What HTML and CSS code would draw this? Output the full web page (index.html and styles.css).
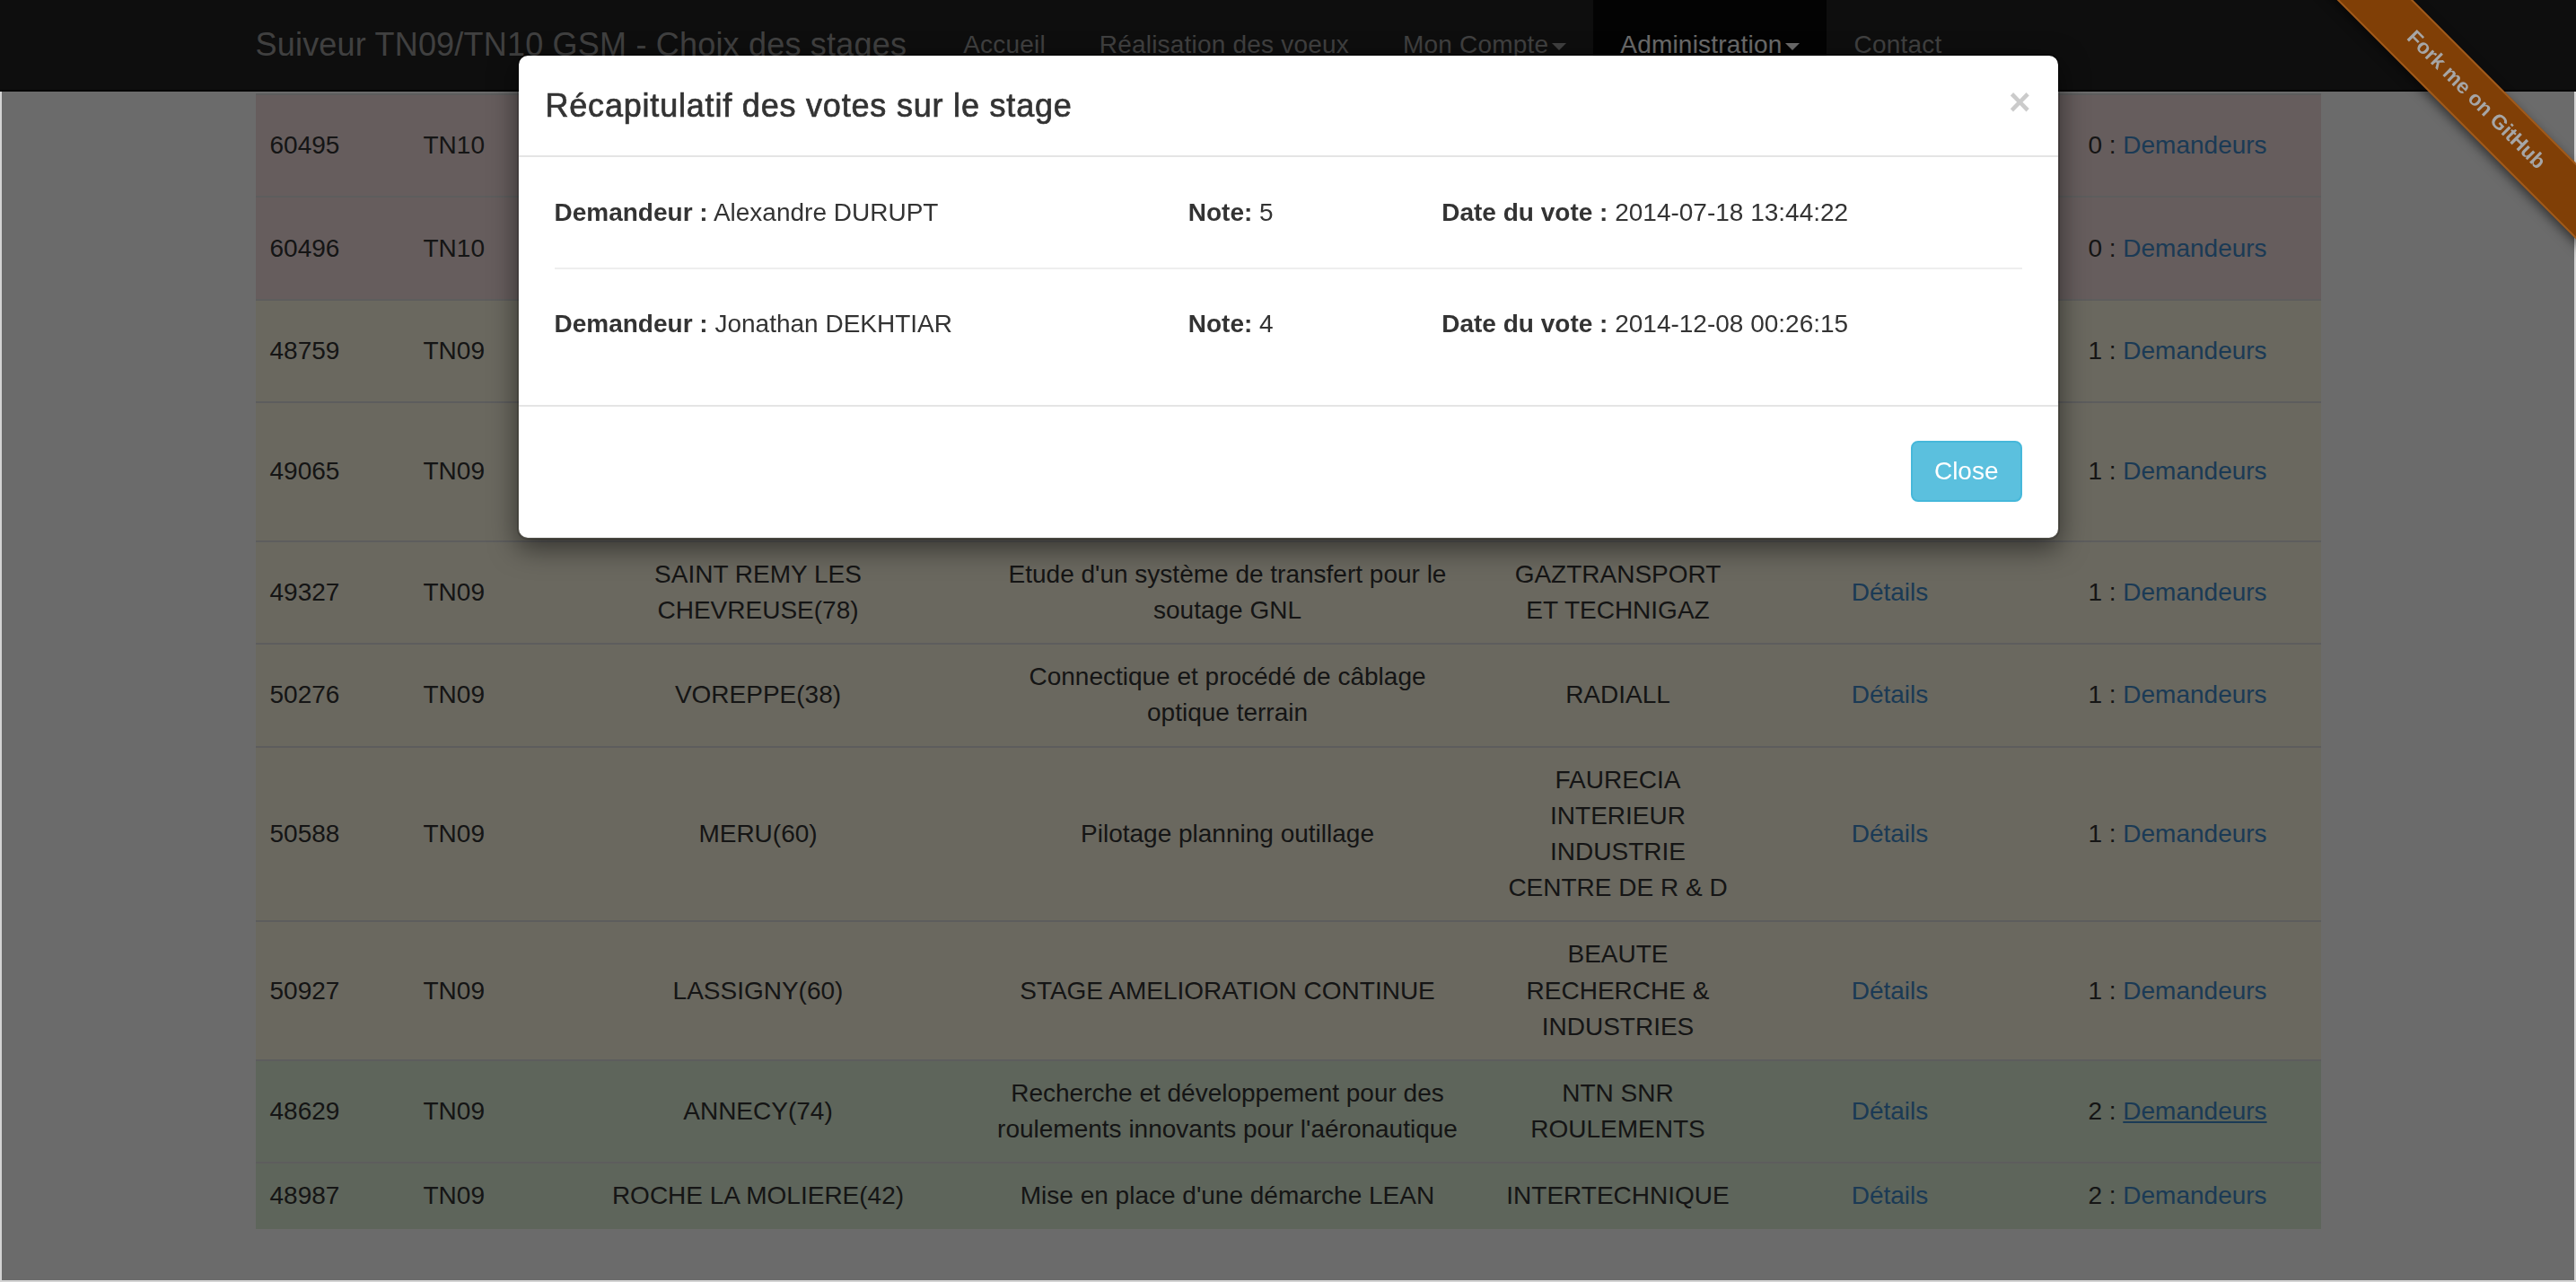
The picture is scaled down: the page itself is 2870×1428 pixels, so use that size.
FILE: index.html
```html
<!DOCTYPE html>
<html lang="fr">
<head>
<meta charset="utf-8">
<title>Suiveur TN09/TN10 GSM - Choix des stages</title>
<link rel="stylesheet" href="styles.css">
</head>
<body>
<nav class="navbar">
  <div class="container nav-inner">
    <a class="brand" href="#">Suiveur TN09/TN10 GSM - Choix des stages</a>
    <ul class="nav">
      <li><a href="#">Accueil</a></li>
      <li><a href="#">Réalisation des voeux</a></li>
      <li><a href="#">Mon Compte<span class="caret"></span></a></li>
      <li class="active"><a href="#">Administration<span class="caret"></span></a></li>
      <li><a href="#">Contact</a></li>
    </ul>
  </div>
</nav>

<main class="container">
  <table class="stages">
    <colgroup>
      <col class="c-id"><col class="c-tn"><col class="c-city"><col class="c-desc"><col class="c-comp"><col class="c-det"><col class="c-dem">
    </colgroup>
    <tbody>
      <tr class="danger">
        <td>60495</td><td>TN10</td><td class="ctr">MARIGNANE(13)</td><td class="ctr desc">Analyse de la valeur</td><td class="ctr comp">AIRBUS HELICOPTERS</td><td class="ctr"><a href="#">Détails</a></td><td class="ctr">0 : <a href="#">Demandeurs</a></td>
      </tr>
      <tr class="danger">
        <td>60496</td><td>TN10</td><td class="ctr">VELIZY(78)</td><td class="ctr desc">Gestion de projet</td><td class="ctr comp">VALEO SYSTEMES THERMIQUES</td><td class="ctr"><a href="#">Détails</a></td><td class="ctr">0 : <a href="#">Demandeurs</a></td>
      </tr>
      <tr class="warning">
        <td>48759</td><td>TN09</td><td class="ctr">ISTRES(13)</td><td class="ctr desc">Industrialisation</td><td class="ctr comp">DASSAULT AVIATION</td><td class="ctr"><a href="#">Détails</a></td><td class="ctr">1 : <a href="#">Demandeurs</a></td>
      </tr>
      <tr class="warning">
        <td>49065</td><td>TN09</td><td class="ctr">FLORANGE(57)</td><td class="ctr desc">Maintenance</td><td class="ctr comp">ARCELORMITTAL ATLANTIQUE ET LORRAINE</td><td class="ctr"><a href="#">Détails</a></td><td class="ctr">1 : <a href="#">Demandeurs</a></td>
      </tr>
      <tr class="warning">
        <td>49327</td><td>TN09</td><td class="ctr">SAINT REMY LES CHEVREUSE(78)</td><td class="ctr desc">Etude d'un système de transfert pour le soutage GNL</td><td class="ctr comp">GAZTRANSPORT ET TECHNIGAZ</td><td class="ctr"><a href="#">Détails</a></td><td class="ctr">1 : <a href="#">Demandeurs</a></td>
      </tr>
      <tr class="warning">
        <td>50276</td><td>TN09</td><td class="ctr">VOREPPE(38)</td><td class="ctr desc">Connectique et procédé de câblage optique terrain</td><td class="ctr comp">RADIALL</td><td class="ctr"><a href="#">Détails</a></td><td class="ctr">1 : <a href="#">Demandeurs</a></td>
      </tr>
      <tr class="warning">
        <td>50588</td><td>TN09</td><td class="ctr">MERU(60)</td><td class="ctr desc">Pilotage planning outillage</td><td class="ctr comp">FAURECIA INTERIEUR INDUSTRIE CENTRE DE R &amp; D</td><td class="ctr"><a href="#">Détails</a></td><td class="ctr">1 : <a href="#">Demandeurs</a></td>
      </tr>
      <tr class="warning">
        <td>50927</td><td>TN09</td><td class="ctr">LASSIGNY(60)</td><td class="ctr desc">STAGE AMELIORATION CONTINUE</td><td class="ctr comp">BEAUTE RECHERCHE &amp; INDUSTRIES</td><td class="ctr"><a href="#">Détails</a></td><td class="ctr">1 : <a href="#">Demandeurs</a></td>
      </tr>
      <tr class="success">
        <td>48629</td><td>TN09</td><td class="ctr">ANNECY(74)</td><td class="ctr desc">Recherche et développement pour des roulements innovants pour l'aéronautique</td><td class="ctr comp">NTN SNR ROULEMENTS</td><td class="ctr"><a href="#">Détails</a></td><td class="ctr">2 : <a class="hover" href="#">Demandeurs</a></td>
      </tr>
      <tr class="success">
        <td>48987</td><td>TN09</td><td class="ctr">ROCHE LA MOLIERE(42)</td><td class="ctr desc">Mise en place d'une démarche LEAN</td><td class="ctr comp">INTERTECHNIQUE</td><td class="ctr"><a href="#">Détails</a></td><td class="ctr">2 : <a href="#">Demandeurs</a></td>
      </tr>
    </tbody>
  </table>
</main>

<div class="backdrop"></div>

<div class="ribbon-wrap"><a class="ribbon" href="#">Fork me on GitHub</a></div>

<div class="modal">
  <div class="modal-dialog">
    <div class="modal-content">
      <div class="modal-header">
        <h4 class="modal-title">Récapitulatif des votes sur le stage</h4>
        <button class="close" type="button">×</button>
      </div>
      <div class="modal-body">
        <div class="vote">
          <div><b>Demandeur :</b> Alexandre DURUPT</div>
          <div><b>Note:</b> 5</div>
          <div><b>Date du vote :</b> 2014-07-18 13:44:22</div>
        </div>
        <hr>
        <div class="vote">
          <div><b>Demandeur :</b> Jonathan DEKHTIAR</div>
          <div><b>Note:</b> 4</div>
          <div><b>Date du vote :</b> 2014-12-08 00:26:15</div>
        </div>
      </div>
      <div class="modal-footer">
        <button class="btn-info" type="button">Close</button>
      </div>
    </div>
  </div>
</div>

<div class="frame"></div>
</body>
</html>
```

FILE: styles.css
```css
html, body {
  margin: 0;
  padding: 0;
}
body {
  background: #fff;
  font-family: "Liberation Sans", Arial, sans-serif;
  font-size: 28px;
  line-height: 40px;
  color: #333;
  width: 2870px;
  height: 1428px;
  overflow: hidden;
}
a {
  color: #428bca;
  text-decoration: none;
}
a.hover {
  text-decoration: underline;
}
.container {
  width: 2301px;
  margin: 0 auto;
}

/* navbar */
.navbar {
  position: fixed;
  top: 0;
  left: 0;
  right: 0;
  height: 100px;
  background: #222;
  border-bottom: 2px solid #080808;
  z-index: 1030;
}
.nav-inner {
  display: flex;
  height: 100px;
}
.brand {
  display: block;
  font-size: 36px;
  line-height: 40px;
  padding: 30px 33px 30px 0;
  color: #999;
  letter-spacing: 0.2px;
}
.nav {
  display: flex;
  list-style: none;
  margin: 0;
  padding: 0;
}
.nav li a {
  display: block;
  padding: 30px;
  line-height: 40px;
  color: #999;
  letter-spacing: 0.2px;
}
.nav li.active a {
  background: #080808;
  color: #fff;
}
.caret {
  display: inline-block;
  width: 0;
  height: 0;
  margin-left: 4px;
  vertical-align: middle;
  border-top: 8px solid;
  border-left: 8px solid transparent;
  border-right: 8px solid transparent;
}

/* table */
main {
  padding-top: 104px;
}
.stages {
  width: 100%;
  border-collapse: collapse;
  table-layout: fixed;
}
.c-id { width: 171px; }
.c-tn { width: 159px; }
.c-city { width: 460px; }
.c-desc { width: 586px; }
.c-comp { width: 284px; }
.c-det { width: 322px; }
.c-dem { width: 319px; }
.stages td {
  padding: 16px;
  line-height: 40.2px;
  border-top: 2px solid #ddd;
  vertical-align: middle;
}
.stages td.ctr {
  text-align: center;
}
.stages td.desc {
  padding-left: 28px;
  padding-right: 28px;
}
.stages td.comp {
  padding-left: 14px;
  padding-right: 14px;
}
.danger td { background: #f2dede; }
.warning td { background: #fcf8e3; }
.success td { background: #dff0d8; }

/* backdrop */
.backdrop {
  position: fixed;
  inset: 0;
  background: rgba(0, 0, 0, 0.58);
  z-index: 1040;
}

/* ribbon */
.ribbon-wrap {
  position: fixed;
  top: 0;
  right: 0;
  width: 320px;
  height: 320px;
  overflow: hidden;
  z-index: 9999;
}
.ribbon {
  position: absolute;
  left: -22px;
  top: 82px;
  width: 460px;
  height: 60px;
  box-sizing: border-box;
  transform: rotate(45deg);
  background: #803f06;
  color: #a6a6a6;
  font-size: 23px;
  font-weight: bold;
  line-height: 52px;
  text-align: center;
  border-top: 2px solid rgba(255, 170, 90, 0.25);
  border-bottom: 2px solid rgba(255, 170, 90, 0.25);
  box-shadow: 0 4px 12px rgba(0, 0, 0, 0.5);
  text-decoration: none;
}

/* modal */
.modal {
  position: fixed;
  inset: 0;
  z-index: 1050;
}
.modal-dialog {
  width: 1719px;
  margin: 60px auto 0;
}
.modal-content {
  background: #fff;
  background-clip: padding-box;
  border: 2px solid rgba(0, 0, 0, 0.2);
  border-radius: 12px;
  box-shadow: 0 10px 30px rgba(0, 0, 0, 0.5);
}
.modal-header {
  display: flex;
  justify-content: space-between;
  align-items: flex-start;
  padding: 30px;
  border-bottom: 2px solid #e5e5e5;
}
.modal-title {
  margin: 0;
  font-size: 36px;
  font-weight: normal;
  line-height: 51.43px;
  letter-spacing: 0.8px;
  -webkit-text-stroke: 0.7px #333;
}
.close {
  margin-top: 1px;
  padding: 0;
  border: 0;
  background: none;
  font-family: "Liberation Sans", Arial, sans-serif;
  font-size: 42px;
  font-weight: bold;
  line-height: 1;
  color: #000;
  opacity: 0.2;
}
.modal-body {
  padding: 42px 40px 40px;
}
.vote {
  display: grid;
  grid-template-columns: 5fr 2fr 5fr;
  margin: 0 -30px;
}
.vote > div {
  padding: 0 30px;
}
.modal-body hr {
  border: 0;
  border-top: 2px solid #eee;
  margin: 41px 0;
}
.modal-footer {
  margin-top: 30px;
  padding: 38px 40px 40px;
  border-top: 2px solid #e5e5e5;
  text-align: right;
}
.btn-info {
  font-family: "Liberation Sans", Arial, sans-serif;
  font-size: 28px;
  line-height: 40px;
  padding: 12px 24px;
  color: #fff;
  background: #5bc0de;
  border: 2px solid #46b8da;
  border-radius: 8px;
}

/* window frame of the capture, below the navbar */
.frame {
  position: fixed;
  top: 102px;
  left: 0;
  right: 0;
  bottom: 0;
  border: 2px solid #d4d4d4;
  border-top: 0;
  pointer-events: none;
  z-index: 1045;
}
```
